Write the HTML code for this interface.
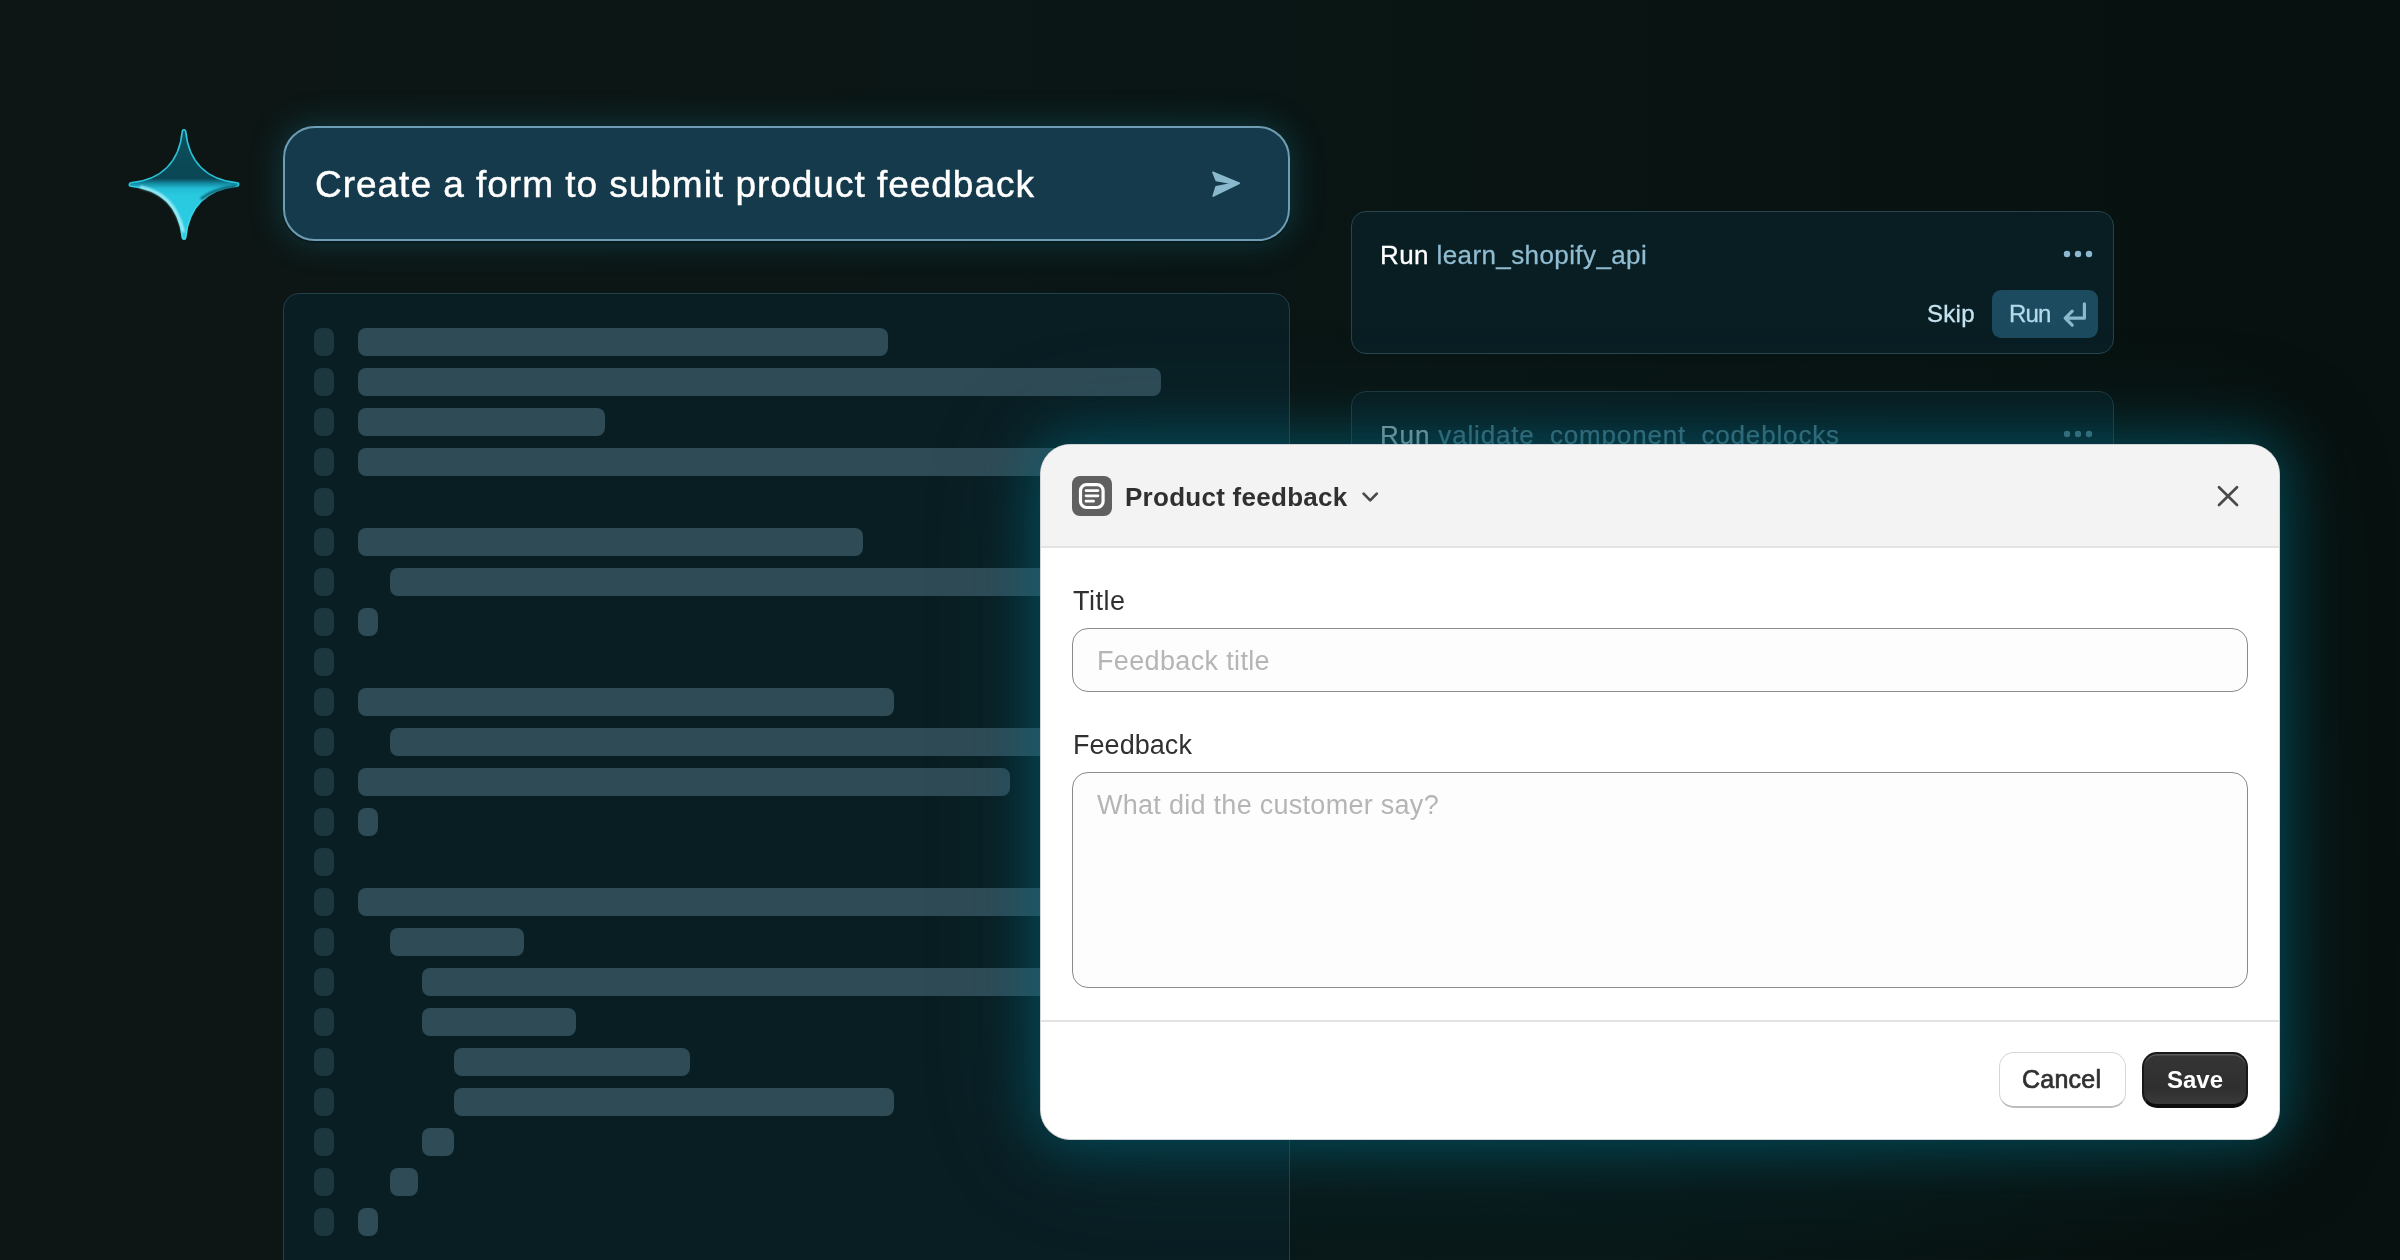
<!DOCTYPE html>
<html>
<head>
<meta charset="utf-8">
<title>Product feedback</title>
<style>
*{box-sizing:border-box;margin:0;padding:0}
html,body{width:2400px;height:1260px;overflow:hidden}
body{position:relative;background:#0b1413;font-family:"Liberation Sans",sans-serif;}
.abs{position:absolute}
.t{position:absolute;white-space:nowrap;line-height:1;will-change:opacity}
#bg{left:0;top:0;width:2400px;height:1260px;
 background:
  radial-gradient(ellipse 900px 520px at 1500px 900px, rgba(6,44,52,.55), rgba(6,44,52,0) 100%),
  linear-gradient(90deg,#0e1615 0%,#0a1615 45%,#07110f 100%);}
/* prompt */
#prompt{left:283px;top:126px;width:1007px;height:115px;border-radius:32px;background:#143a4b;border:2px solid #6f9db3;
 box-shadow:0 0 30px 3px rgba(24,110,130,.36), 0 2px 1px rgba(0,0,0,.6);}
#ptext{left:315px;top:166px;font-size:37px;color:#fff;-webkit-text-stroke:.45px #fff}
/* code */
#code{left:283px;top:293px;width:1007px;height:1000px;border-radius:16px;background:#091e23;border:1.5px solid #21404a;}
.ln{position:absolute;left:314px;width:20px;height:28px;border-radius:8px;background:#1d373e}
.bar{position:absolute;height:28px;border-radius:8px;background:#2f4b55}
/* panels */
.panel{position:absolute;left:1351px;width:763px;height:143px;border-radius:15px;background:#091e23;border:1.5px solid #27454d}
.dots{position:absolute;width:6.4px;height:6.4px;border-radius:50%;background:#8db8d0}
#runbtn{left:1992px;top:290px;width:106px;height:48px;border-radius:9px;background:#1c4a5f}
/* modal */
#glow{left:1040px;top:444px;width:1240px;height:696px;border-radius:30px;
 box-shadow:0 0 52px 6px rgba(0,108,128,.52),0 0 110px 12px rgba(0,98,118,.2);}
#modal{left:1040px;top:444px;width:1240px;height:696px;border-radius:30px;background:#fff;overflow:hidden;border:1px solid #cfd5d8}
#mhead{left:0;top:0;width:1240px;height:103px;background:#f3f3f3;border-bottom:2px solid #e3e3e3}
#micon{left:1072px;top:476px;width:40px;height:40px;border-radius:8px;background:#606060}
.inp{position:absolute;left:1072px;width:1176px;border-radius:16px;border:1.5px solid #8a8a8a;background:#fdfdfd}
.lab{color:#303030;font-size:27px}
.ph{color:#b5b5b5;font-size:27px}
#mfoot{left:1041px;top:1020px;width:1238px;height:2px;background:#e3e3e3}
#cancel{left:1999px;top:1052px;width:127px;height:56px;border-radius:15px;background:#fff;border:1.5px solid #d6d6d6;border-bottom:2px solid #bcbcbc}
#save{left:2142px;top:1052px;width:106px;height:56px;border-radius:15px;background:linear-gradient(#353535,#2f2f2f 70%,#3a3a3a);border:2.5px solid #191919;border-bottom:4px solid #0d0d0d;box-shadow:inset 0 1.5px 0 #5a5a5a}
</style>
</head>
<body>
<div id="bg" class="abs"></div>

<!-- star placeholder -->
<svg id="star" class="abs" style="left:124px;top:124px" width="120" height="121" viewBox="124 124 120 121">
 <defs>
  <linearGradient id="sg" x1="0" y1="129" x2="0" y2="240" gradientUnits="userSpaceOnUse">
   <stop offset="0" stop-color="#0e5b6c"/><stop offset=".15" stop-color="#0b4c5b"/><stop offset=".445" stop-color="#0a4653"/>
   <stop offset=".49" stop-color="#138aa1"/><stop offset=".535" stop-color="#22bdd5"/><stop offset=".6" stop-color="#29c9e0"/><stop offset="1" stop-color="#2ccde4"/>
  </linearGradient>
  <linearGradient id="sr" x1="0" y1="129" x2="0" y2="240" gradientUnits="userSpaceOnUse">
   <stop offset="0" stop-color="#2fcbe0"/><stop offset=".4" stop-color="#25bcd3"/><stop offset=".55" stop-color="#2ccbe2"/><stop offset="1" stop-color="#46dcee"/>
  </linearGradient>
  <filter id="b2" x="-50%" y="-50%" width="200%" height="200%"><feGaussianBlur stdDeviation="1.1"/></filter>
 </defs>
 <path d="M184.0,131.5 C187.0,163.0 205.5,181.5 237.0,184.5 C205.5,187.5 187.0,206.0 184.0,237.5 C181.0,206.0 162.5,187.5 131.0,184.5 C162.5,181.5 181.0,163.0 184.0,131.5 Z" fill="url(#sr)" stroke="url(#sr)" stroke-width="5" stroke-linejoin="round"/>
 <path d="M184.0,131.5 C187.0,163.0 205.5,181.5 237.0,184.5 C205.5,187.5 187.0,206.0 184.0,237.5 C181.0,206.0 162.5,187.5 131.0,184.5 C162.5,181.5 181.0,163.0 184.0,131.5 Z" fill="url(#sg)" stroke="url(#sg)" stroke-width="2" stroke-linejoin="round"/>
 <path d="M141,187 C164.5,192.5 176.5,206 183.3,231" fill="none" stroke="#c8f8fc" stroke-width="2.6" stroke-linecap="round" filter="url(#b2)" opacity=".9"/>
 <path d="M235.5,186.6 C220,188.6 209,192.5 201.5,198.5" fill="none" stroke="#062a33" stroke-width="2" stroke-linecap="round" filter="url(#b2)" opacity=".85"/>
</svg>

<div id="prompt" class="abs"></div>
<div id="ptext" class="t" style="letter-spacing:.98px">Create a form to submit product feedback</div>

<div id="code" class="abs"></div>
<div id="rows">
<div class="ln" style="top:328px"></div>
<div class="bar" style="left:358px;top:328px;width:530px"></div>
<div class="ln" style="top:368px"></div>
<div class="bar" style="left:358px;top:368px;width:803px"></div>
<div class="ln" style="top:408px"></div>
<div class="bar" style="left:358px;top:408px;width:247px"></div>
<div class="ln" style="top:448px"></div>
<div class="bar" style="left:358px;top:448px;width:742px"></div>
<div class="ln" style="top:488px"></div>
<div class="ln" style="top:528px"></div>
<div class="bar" style="left:358px;top:528px;width:505px"></div>
<div class="ln" style="top:568px"></div>
<div class="bar" style="left:390px;top:568px;width:710px"></div>
<div class="ln" style="top:608px"></div>
<div class="bar" style="left:358px;top:608px;width:20px"></div>
<div class="ln" style="top:648px"></div>
<div class="ln" style="top:688px"></div>
<div class="bar" style="left:358px;top:688px;width:536px"></div>
<div class="ln" style="top:728px"></div>
<div class="bar" style="left:390px;top:728px;width:710px"></div>
<div class="ln" style="top:768px"></div>
<div class="bar" style="left:358px;top:768px;width:652px"></div>
<div class="ln" style="top:808px"></div>
<div class="bar" style="left:358px;top:808px;width:20px"></div>
<div class="ln" style="top:848px"></div>
<div class="ln" style="top:888px"></div>
<div class="bar" style="left:358px;top:888px;width:742px"></div>
<div class="ln" style="top:928px"></div>
<div class="bar" style="left:390px;top:928px;width:134px"></div>
<div class="ln" style="top:968px"></div>
<div class="bar" style="left:422px;top:968px;width:678px"></div>
<div class="ln" style="top:1008px"></div>
<div class="bar" style="left:422px;top:1008px;width:154px"></div>
<div class="ln" style="top:1048px"></div>
<div class="bar" style="left:454px;top:1048px;width:236px"></div>
<div class="ln" style="top:1088px"></div>
<div class="bar" style="left:454px;top:1088px;width:440px"></div>
<div class="ln" style="top:1128px"></div>
<div class="bar" style="left:422px;top:1128px;width:32px"></div>
<div class="ln" style="top:1168px"></div>
<div class="bar" style="left:390px;top:1168px;width:28px"></div>
<div class="ln" style="top:1208px"></div>
<div class="bar" style="left:358px;top:1208px;width:20px"></div>
</div>

<div class="panel" style="top:211px"></div>
<div class="panel" style="top:391px;opacity:.75"></div>
<div id="r1" class="t" style="-webkit-text-stroke:.3px;letter-spacing:.4px;left:1380px;top:242px;font-size:26px;color:#fff"><span id="r1a">Run</span> <span id="r1b" style="color:#8fbcd1">learn_shopify_api</span></div>
<div id="skip" class="t" style="-webkit-text-stroke:.3px;letter-spacing:.3px;left:1927px;top:301.6px;font-size:24px;color:#c4e2ef">Skip</div>
<div id="runbtn" class="abs"></div>
<div id="runt" class="t" style="-webkit-text-stroke:.3px;letter-spacing:-.8px;left:2009px;top:301.6px;font-size:24px;color:#b4dbec">Run</div>
<div id="r2" class="t" style="-webkit-text-stroke:.25px;letter-spacing:.84px;left:1380px;top:422px;font-size:26px;color:#8da3a8"><span>Run</span> <span id="r2b" style="color:#436c79">validate_component_codeblocks</span></div>

<svg id="ic1" class="abs" style="left:0;top:0" width="2400" height="1260" viewBox="0 0 2400 1260">
 <!-- send -->
 <path d="M1212.9,172.3 L1239.4,183.2 L1213.2,196.1 L1216,186.9 L1232.5,183.5 L1216.2,180.4 Z" fill="#8ab8cd" stroke="#8ab8cd" stroke-width="1.6" stroke-linejoin="round"/>
 <!-- dots panel 1 -->
 <circle cx="2067" cy="254" r="3.2" fill="#8db8d0"/><circle cx="2078" cy="254" r="3.2" fill="#8db8d0"/><circle cx="2089" cy="254" r="3.2" fill="#8db8d0"/>
 <!-- dots panel 2 -->
 <circle cx="2067" cy="434" r="3.2" fill="#47707c"/><circle cx="2078" cy="434" r="3.2" fill="#47707c"/><circle cx="2089" cy="434" r="3.2" fill="#47707c"/>
 <!-- enter -->
 <path d="M2084.4,303.8 V318.2 H2065.8 M2072.2,311.2 L2065.2,318.2 L2072.2,325.2" fill="none" stroke="#8ab8cd" stroke-width="3.2" stroke-linecap="round" stroke-linejoin="round"/>
</svg>

<div id="glow" class="abs"></div>
<div id="modal" class="abs"><div id="mhead" class="abs"></div></div>
<div id="mfoot" class="abs"></div>
<div id="micon" class="abs"></div>
<div id="mtitle" class="t" style="letter-spacing:.27px;left:1125px;top:484px;font-size:26px;font-weight:bold;color:#303030">Product feedback</div>
<div id="l1" class="t lab" style="letter-spacing:.5px;left:1073px;top:588px">Title</div>
<div class="inp" style="top:628px;height:64px"></div>
<div id="p1" class="t ph" style="letter-spacing:.35px;left:1097px;top:648px">Feedback title</div>
<div id="l2" class="t lab" style="letter-spacing:.05px;left:1073px;top:732.1px">Feedback</div>
<div class="inp" style="top:772px;height:216px"></div>
<div id="p2" class="t ph" style="letter-spacing:.28px;left:1097px;top:791.9px">What did the customer say?</div>
<div id="cancel" class="abs"></div>
<div id="ct" class="t" style="left:2022px;top:1067px;font-size:25px;letter-spacing:.25px;color:#303030;-webkit-text-stroke:.7px #303030">Cancel</div>
<div id="save" class="abs"></div>
<div id="st" class="t" style="left:2167px;top:1068px;font-size:24px;color:#fff;font-weight:bold">Save</div>

<svg id="ic2" class="abs" style="left:0;top:0" width="2400" height="1260" viewBox="0 0 2400 1260">
 <!-- form icon -->
 <rect x="1080.5" y="484.7" width="22.6" height="22.8" rx="6" fill="none" stroke="#fff" stroke-width="3.2"/>
 <path d="M1086,490.6 H1098 M1086,495.8 H1098 M1086,501.2 H1093.6" fill="none" stroke="#fff" stroke-width="2.7" stroke-linecap="round"/>
 <!-- chevron -->
 <path d="M1363.6,493.6 L1370.2,500.4 L1376.8,493.6" fill="none" stroke="#4a4a4a" stroke-width="2.7" stroke-linecap="round" stroke-linejoin="round"/>
 <!-- close -->
 <path d="M2219,487.2 L2237,505 M2237,487.2 L2219,505" fill="none" stroke="#4a4a4a" stroke-width="2.7" stroke-linecap="round"/>
</svg>
</body>
</html>
